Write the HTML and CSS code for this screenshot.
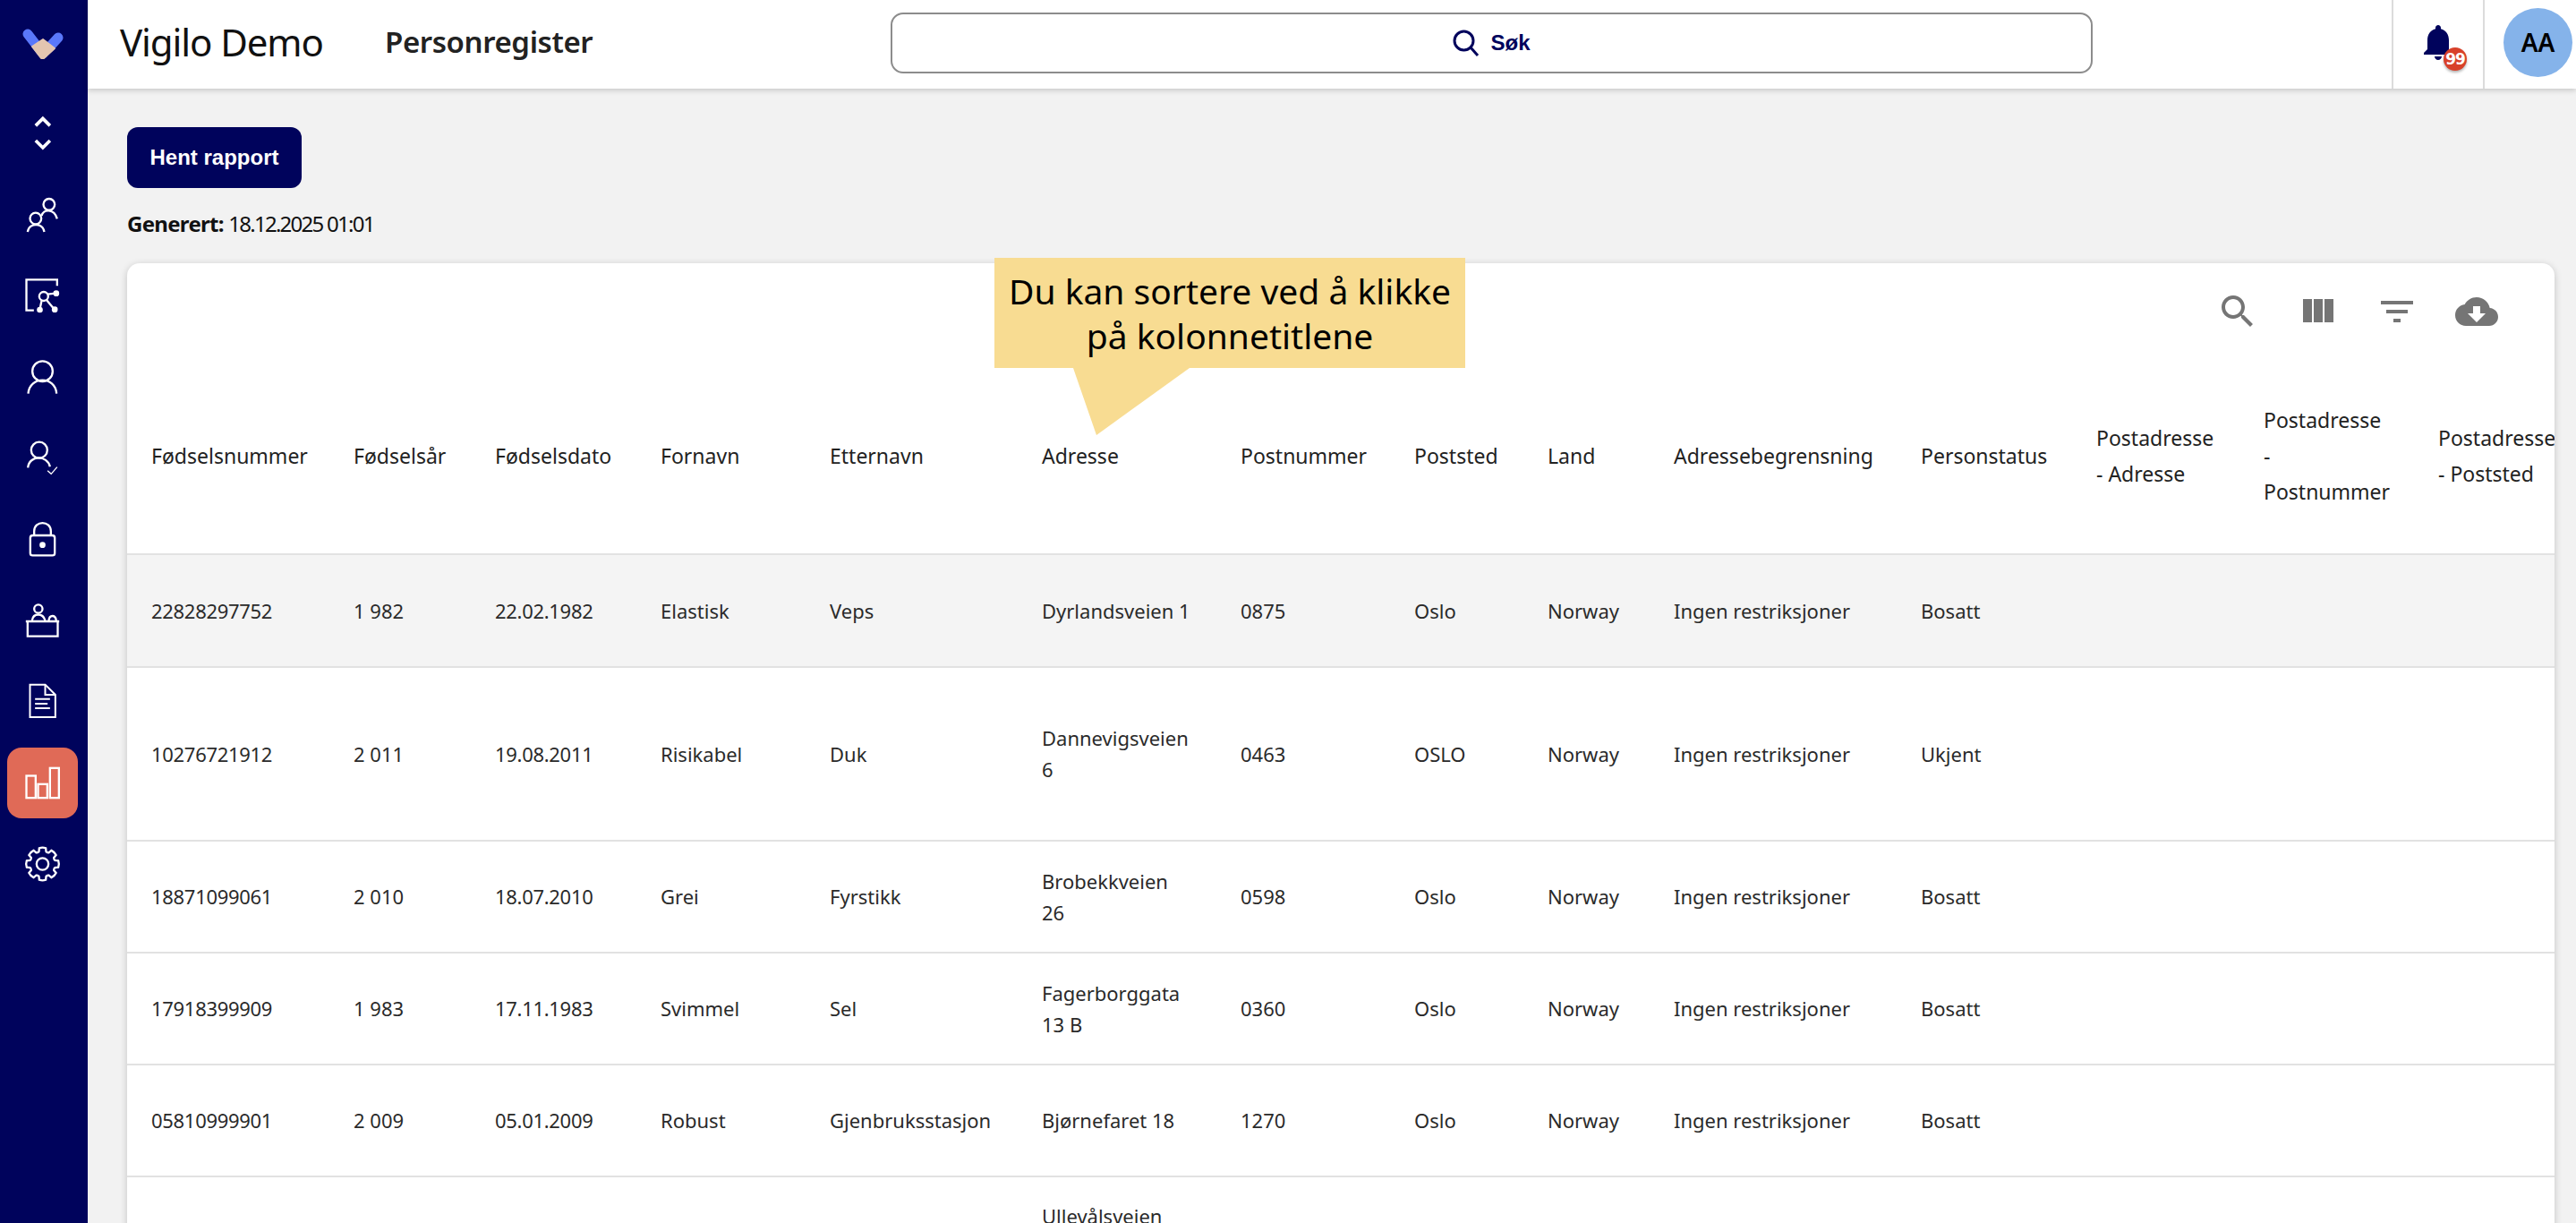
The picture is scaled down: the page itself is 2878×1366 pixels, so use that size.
FILE: index.html
```html
<!DOCTYPE html>
<html lang="en">
<head>
  <meta charset="UTF-8">
  <title>Vigilo Demo - Personregister</title>
  <link rel="stylesheet" href="styles.css">
</head>
<body>
  <!-- Sidebar -->
  <aside class="sidebar">
    <svg class="logo" viewBox="0 0 46 34">
      <path class="logo-left" d="M6 6 L23 28"/>
      <path class="logo-right" d="M40 10 L30 21"/>
      <path class="logo-hand" d="M23 12 L36 22 L24 33 L21 33 L11 20 Z"/>
    </svg>
    <div class="expand-toggle">
      <svg viewBox="52.5 60 180 180"><path d="M118 124 L142 100 L166 124M118 174 L142 198 L166 174"/></svg>
    </div>
    <nav class="nav">
      <a class="nav-item"><svg viewBox="52.5 340 180 180">
        <circle cx="163" cy="386" r="19"/><path d="M138 424 C144 400 180 400 190 434"/>
        <circle cx="118" cy="433" r="19"/><path d="M91 478 C96 446 142 446 147 478"/>
      </svg></a>
      <a class="nav-item"><svg viewBox="52.5 611 180 180">
        <path d="M190 660 V639 H87 V742 H112"/><circle cx="145" cy="695" r="15"/>
        <path d="M158 688 L185 685M138 710 L132 738M155 708 L180 738"/>
        <circle class="dot" cx="187" cy="685" r="10"/><circle class="dot" cx="132" cy="740" r="10"/><circle class="dot" cx="182" cy="739" r="10"/>
      </svg></a>
      <a class="nav-item"><svg viewBox="52.5 882 180 180">
        <circle cx="141" cy="947" r="34"/><path d="M93 1022 C98 962 184 962 188 1022"/>
      </svg></a>
      <a class="nav-item"><svg viewBox="52.5 1153 180 180">
        <circle cx="130" cy="1212" r="27"/><path d="M92 1271 C96 1228 158 1228 166 1268"/>
        <path class="thin" d="M158 1281 L170 1292 L190 1269"/>
      </svg></a>
      <a class="nav-item"><svg viewBox="52.5 -16 180 180">
        <rect x="100" y="56" width="82" height="67" rx="8"/><path d="M113 56 V42 C113 5 169 5 169 42 V56"/>
        <circle class="dot" cx="141" cy="88" r="10"/>
      </svg></a>
      <a class="nav-item"><svg viewBox="52.5 255 180 180">
        <circle cx="127" cy="303" r="14"/><path d="M106 342 C110 316 142 316 150 342M162 342 C164 322 184 322 187 342"/>
        <path d="M85 345 H197M91 345 V395 H192 V345"/>
      </svg></a>
      <a class="nav-item"><svg viewBox="52.5 526 180 180">
        <path class="mid" d="M99 558 H150 L184 592 V667 H99 Z"/><path class="mid" d="M150 558 V592 H184"/>
        <path class="mid" d="M116 606 H166M116 622 H158M116 637 H166"/>
      </svg></a>
      <a class="nav-item active"><svg viewBox="52.5 796.5 180 180">
        <rect x="87" y="861" width="31" height="74"/><rect x="126" y="889" width="31" height="46"/><rect x="166" y="835" width="30" height="100"/>
      </svg></a>
      <a class="nav-item"><svg viewBox="52.5 1067 180 180">
        <defs><path id="tooth" d="M-16 -38 L-12 -42 L-11 -53 Q0 -57 11 -53 L12 -42 L16 -38"/></defs>
        <g transform="translate(141 1157)">
          <use href="#tooth"/><use href="#tooth" transform="rotate(45)"/><use href="#tooth" transform="rotate(90)"/><use href="#tooth" transform="rotate(135)"/>
          <use href="#tooth" transform="rotate(180)"/><use href="#tooth" transform="rotate(225)"/><use href="#tooth" transform="rotate(270)"/><use href="#tooth" transform="rotate(315)"/>
          <circle r="20"/>
        </g>
      </svg></a>
    </nav>
  </aside>

  <div class="main">
    <!-- Top bar -->
    <header class="topbar">
      <div class="brand">Vigilo Demo</div>
      <div class="page-title">Personregister</div>
      <button class="search-box">
        <svg viewBox="0 0 30 30"><circle cx="12.5" cy="12.5" r="10.5"/><path d="M20 20 L28 29"/></svg>
        <span>Søk</span>
      </button>
      <div class="top-section bell">
        <svg viewBox="0 0 24 24"><path d="M12 22c1.1 0 2-.9 2-2h-4c0 1.1.89 2 2 2zm6-6v-5c0-3.07-1.64-5.64-4.5-6.32V4c0-.83-.67-1.5-1.5-1.5s-1.5.67-1.5 1.5v.68C7.63 5.36 6 7.92 6 11v5l-2 2v1h16v-1l-2-2z"/></svg>
        <span class="badge">99</span>
      </div>
      <div class="top-section profile">
        <div class="avatar">AA</div>
      </div>
    </header>

    <main class="content">
      <button class="report-btn">Hent rapport</button>
      <p class="generated"><strong>Generert:</strong> <span class="generated-date">18.12.2025 01:01</span></p>

      <div class="card">
        <div class="hint">Du kan sortere ved å klikke<br>på kolonnetitlene</div>

        <div class="toolbar">
          <svg viewBox="0 0 24 24"><path d="M15.5 14h-.79l-.28-.27C15.41 12.59 16 11.11 16 9.5 16 5.91 13.09 3 9.5 3S3 5.91 3 9.5 5.91 16 9.5 16c1.61 0 3.09-.59 4.23-1.57l.27.28v.79l5 4.99L20.49 19l-4.99-5zm-6 0C7.01 14 5 11.99 5 9.5S7.01 5 9.5 5 14 7.01 14 9.5 11.99 14 9.5 14z"/></svg>
          <svg viewBox="0 0 24 24"><path d="M10 18h5V5h-5v13zm-6 0h5V5H4v13zM16 5v13h5V5h-5z"/></svg>
          <svg viewBox="0 0 24 24"><path d="M10 18h4v-2h-4v2zM3 6v2h18V6H3zm3 7h12v-2H6v2z"/></svg>
          <svg viewBox="0 0 24 24"><path d="M19.35 10.04C18.67 6.59 15.64 4 12 4 9.11 4 6.6 5.64 5.35 8.04 2.34 8.36 0 10.91 0 14c0 3.31 2.69 6 6 6h13c2.76 0 5-2.24 5-5 0-2.64-2.05-4.78-4.65-4.96zM17 13l-5 5-5-5h3V9h4v4h3z"/></svg>
        </div>

        <div class="table-wrap">
          <table class="report">
            <colgroup>
              <col class="c-226"><col class="c-158"><col class="c-185"><col class="c-189"><col class="c-237"><col class="c-222"><col class="c-194">
              <col class="c-149"><col class="c-141"><col class="c-276"><col class="c-196"><col class="c-187"><col class="c-195"><col class="c-195">
            </colgroup>
            <thead>
              <tr>
                <th>Fødselsnummer</th><th>Fødselsår</th><th>Fødselsdato</th><th>Fornavn</th><th>Etternavn</th><th>Adresse</th><th>Postnummer</th>
                <th>Poststed</th><th>Land</th><th>Adressebegrensning</th><th>Personstatus</th><th>Postadresse - Adresse</th><th>Postadresse - Postnummer</th><th>Postadresse - Poststed</th>
              </tr>
            </thead>
            <tbody>
              <tr class="highlight">
                <td class="num">22828297752</td><td>1 982</td><td class="num">22.02.1982</td><td>Elastisk</td><td>Veps</td><td>Dyrlandsveien 1</td><td>0875</td>
                <td>Oslo</td><td>Norway</td><td>Ingen restriksjoner</td><td>Bosatt</td><td></td><td></td><td></td>
              </tr>
              <tr class="tall">
                <td class="num">10276721912</td><td>2 011</td><td class="num">19.08.2011</td><td>Risikabel</td><td>Duk</td><td>Dannevigsveien 6</td><td>0463</td>
                <td>OSLO</td><td>Norway</td><td>Ingen restriksjoner</td><td>Ukjent</td><td></td><td></td><td></td>
              </tr>
              <tr>
                <td class="num">18871099061</td><td>2 010</td><td class="num">18.07.2010</td><td>Grei</td><td>Fyrstikk</td><td>Brobekkveien 26</td><td>0598</td>
                <td>Oslo</td><td>Norway</td><td>Ingen restriksjoner</td><td>Bosatt</td><td></td><td></td><td></td>
              </tr>
              <tr>
                <td class="num">17918399909</td><td>1 983</td><td class="num">17.11.1983</td><td>Svimmel</td><td>Sel</td><td>Fagerborggata 13 B</td><td>0360</td>
                <td>Oslo</td><td>Norway</td><td>Ingen restriksjoner</td><td>Bosatt</td><td></td><td></td><td></td>
              </tr>
              <tr>
                <td class="num">05810999901</td><td>2 009</td><td class="num">05.01.2009</td><td>Robust</td><td>Gjenbruksstasjon</td><td>Bjørnefaret 18</td><td>1270</td>
                <td>Oslo</td><td>Norway</td><td>Ingen restriksjoner</td><td>Bosatt</td><td></td><td></td><td></td>
              </tr>
              <tr class="tall">
                <td></td><td></td><td></td><td></td><td></td><td class="top-cell">Ullevålsveien</td><td></td>
                <td></td><td></td><td></td><td></td><td></td><td></td><td></td>
              </tr>
            </tbody>
          </table>
        </div>
      </div>
    </main>
  </div>
</body>
</html>
```

FILE: styles.css
```css
* {
  box-sizing: border-box;
}

html, body {
  height: 100%;
}

body {
  margin: 0;
  display: flex;
  overflow: hidden;
  background-color: #f2f2f2;
  font-family: "Noto Sans", sans-serif;
  color: #1c1c1c;
}

/* Sidebar */
.sidebar {
  flex: 0 0 98px;
  height: 100vh;
  padding-right: 3px;
  background-color: #00035c;
  display: flex;
  flex-direction: column;
  align-items: center;
}

.logo {
  width: 46px;
  height: 34px;
  margin-top: 32px;
  fill: none;
}

.logo-left, .logo-right {
  stroke: #5a78fb;
  stroke-width: 11px;
  stroke-linecap: round;
}

.logo-hand {
  fill: #e4c5b0;
  stroke: #e4c5b0;
  stroke-width: 2px;
  stroke-linejoin: round;
}

.expand-toggle {
  width: 60px;
  height: 60px;
  margin-top: 53px;
}

.expand-toggle svg, .nav-item svg {
  display: block;
  width: 60px;
  height: 60px;
  fill: none;
  stroke: #fff;
  stroke-width: 7px;
}

.expand-toggle svg {
  stroke-width: 11px;
}

.nav {
  margin-top: 24px;
  display: flex;
  flex-direction: column;
  gap: 11.3px;
}

.nav-item {
  width: 79px;
  height: 79px;
  border-radius: 16px;
  display: flex;
  align-items: center;
  justify-content: center;
}

.nav-item.active {
  background-color: #e06a57;
}

.nav-item .dot {
  fill: #fff;
  stroke: none;
}

.nav-item .thin {
  stroke-width: 4px;
}

.nav-item .mid {
  stroke-width: 6px;
}

/* Top bar */
.main {
  flex: 1;
  min-width: 0;
  display: flex;
  flex-direction: column;
}

.topbar {
  flex: 0 0 99px;
  background-color: #fff;
  display: flex;
  align-items: center;
  padding-left: 36px;
  box-shadow: 0 2px 6px rgba(0, 0, 0, 0.18);
  z-index: 2;
}

.brand {
  width: 296px;
  margin-bottom: 6px;
  font-size: 42px;
  letter-spacing: -1.1px;
  color: #111;
}

.page-title {
  width: 565px;
  margin-bottom: 6px;
  font-size: 33px;
  font-weight: 600;
  letter-spacing: -0.4px;
  color: #222;
}

.search-box {
  width: 1343px;
  height: 68px;
  margin-bottom: 4px;
  border: 2px solid #8c8c8c;
  border-radius: 14px;
  background-color: #fff;
  display: flex;
  align-items: center;
  justify-content: center;
  gap: 12px;
  color: #00035c;
  font-family: "Liberation Sans", sans-serif;
  font-size: 24px;
  font-weight: 700;
}

.search-box svg {
  width: 30px;
  height: 30px;
  fill: none;
  stroke: #00035c;
  stroke-width: 3px;
}

.top-section {
  position: relative;
  align-self: flex-start;
  height: 99px;
  display: flex;
  align-items: center;
  justify-content: center;
  border-left: 2px solid #dcdcdc;
}

.bell {
  width: 102px;
  margin-left: 334px;
  padding-bottom: 5px;
}

.bell svg {
  width: 48px;
  height: 48px;
  fill: #00035c;
}

.badge {
  position: absolute;
  left: 56px;
  top: 53px;
  width: 26px;
  height: 26px;
  border-radius: 50%;
  background-color: #d8412a;
  color: #fff;
  font-family: "DejaVu Sans", sans-serif;
  font-size: 17px;
  font-weight: 700;
  line-height: 26px;
  text-align: center;
  letter-spacing: -1px;
  box-shadow: 0 2px 3px rgba(0, 0, 0, 0.3);
}

.profile {
  flex: 1;
  justify-content: flex-end;
  padding: 0 4px 5px 0;
}

.avatar {
  width: 77px;
  height: 77px;
  border-radius: 50%;
  background-color: #85b3ea;
  color: #000;
  font-size: 28px;
  font-weight: 600;
  line-height: 77px;
  text-align: center;
}

/* Content */
.content {
  flex: 1;
  min-height: 0;
  padding: 43px 24px 0 44px;
}

.report-btn {
  display: block;
  width: 195px;
  height: 68px;
  border: none;
  border-radius: 12px;
  background-color: #00035c;
  color: #fff;
  font-family: "Liberation Sans", sans-serif;
  font-size: 24px;
  font-weight: 700;
}

.generated {
  margin: 22px 0 26px;
  font-size: 24px;
  line-height: 36px;
  letter-spacing: -0.7px;
  color: #111;
}

.generated-date {
  letter-spacing: -1.75px;
}

.card {
  position: relative;
  background-color: #fff;
  border-radius: 14px;
  box-shadow: 0 2px 8px rgba(0, 0, 0, 0.2);
}

.hint {
  position: absolute;
  left: 969px;
  top: -6px;
  width: 526px;
  height: 123px;
  padding-top: 12px;
  background-color: #f8dc92;
  color: #000;
  font-size: 39px;
  line-height: 50px;
  text-align: center;
  z-index: 1;
}

.hint::after {
  content: "";
  position: absolute;
  left: 88px;
  top: 123px;
  width: 130px;
  height: 75px;
  background-color: #f8dc92;
  clip-path: polygon(0 0, 100% 0, 20% 100%);
}

.toolbar {
  height: 106px;
  padding: 30px 63px 0 0;
  display: flex;
  justify-content: flex-end;
  gap: 41px;
}

.toolbar svg {
  width: 48px;
  height: 48px;
  fill: #757575;
}

.table-wrap {
  overflow: hidden;
}

.report {
  width: 2750px;
  table-layout: fixed;
  border-collapse: separate;
  border-spacing: 0;
  font-size: 22px;
}

.c-226 { width: 226px; }
.c-158 { width: 158px; }
.c-185 { width: 185px; }
.c-189 { width: 189px; }
.c-237 { width: 237px; }
.c-222 { width: 222px; }
.c-194 { width: 194px; }
.c-149 { width: 149px; }
.c-141 { width: 141px; }
.c-276 { width: 276px; }
.c-196 { width: 196px; }
.c-187 { width: 187px; }
.c-195 { width: 195px; }

.report th, .report td {
  padding: 0 27px;
  text-align: left;
  border-bottom: 2px solid #e2e2e2;
  line-height: 35px;
}

.report th {
  height: 220px;
  font-size: 23px;
  line-height: 40px;
  font-weight: 400;
  color: #222;
}

.report td {
  height: 125px;
  color: #2a2a2a;
}

.report td.num {
  letter-spacing: -0.3px;
}

.report .highlight td {
  height: 126px;
  background-color: #f4f4f4;
}

.report .tall td {
  height: 194px;
}

.report td.top-cell {
  vertical-align: top;
  padding-top: 26px;
}
```
